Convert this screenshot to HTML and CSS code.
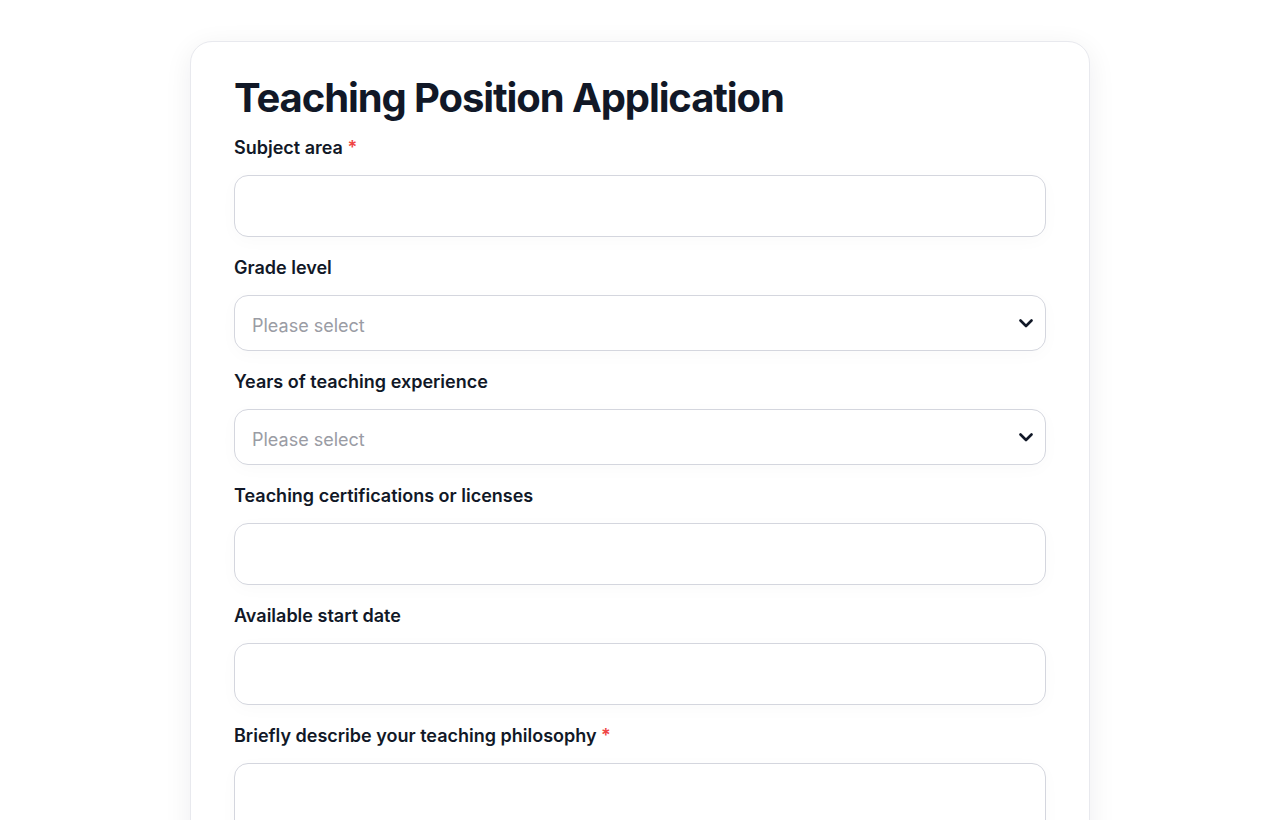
FILE: index.html
```html
<!DOCTYPE html>
<html lang="en">
<head>
  <meta charset="UTF-8">
  <meta name="viewport" content="width=device-width, initial-scale=1.0">
  <title>Teaching Position Application</title>
  <link rel="stylesheet" href="styles.css">
</head>
<body>

  <div class="card">
    <h1>Teaching Position Application</h1>

    <form class="form">
      <div class="field">
        <label for="subject">Subject area <span class="req">*</span></label>
        <input type="text" id="subject" class="input-box">
      </div>

      <div class="field">
        <label for="grade">Grade level</label>
        <div class="select-wrap">
          <select id="grade" class="select-box">
            <option>Please select</option>
            <option>Elementary</option>
            <option>Middle school</option>
            <option>High school</option>
          </select>
          <svg class="chevron" width="14" height="9" viewBox="0 0 14 9"><path d="M1.5 1.5 L7 7 L12.5 1.5" fill="none" stroke="#111827" stroke-width="2.6" stroke-linecap="round" stroke-linejoin="round"/></svg>
        </div>
      </div>

      <div class="field">
        <label for="years">Years of teaching experience</label>
        <div class="select-wrap">
          <select id="years" class="select-box">
            <option>Please select</option>
            <option>0-2</option>
            <option>3-5</option>
            <option>6-10</option>
            <option>10+</option>
          </select>
          <svg class="chevron" width="14" height="9" viewBox="0 0 14 9"><path d="M1.5 1.5 L7 7 L12.5 1.5" fill="none" stroke="#111827" stroke-width="2.6" stroke-linecap="round" stroke-linejoin="round"/></svg>
        </div>
      </div>

      <div class="field">
        <label for="certs">Teaching certifications or licenses</label>
        <input type="text" id="certs" class="input-box">
      </div>

      <div class="field">
        <label for="start">Available start date</label>
        <input type="text" id="start" class="input-box">
      </div>

      <div class="field">
        <label for="philosophy">Briefly describe your teaching philosophy <span class="req">*</span></label>
        <textarea id="philosophy" class="input-box text-area"></textarea>
      </div>
    </form>
  </div>

</body>
</html>
```

FILE: styles.css
```css
body {
  background-color: #fff;
  color: #111827;
  font-family: Inter, "Liberation Sans", sans-serif;
  margin: 0;
  padding: 41px 0 40px;
}
.card {
  width: 900px;
  box-sizing: border-box;
  margin: 0 auto;
  background-color: #fff;
  border: 1px solid #e8e9ee;
  border-radius: 22px;
  box-shadow: 0 6px 28px rgba(17, 24, 39, 0.07);
  padding: 32px 43px 40px;
}
h1 {
  margin: 0 0 14px;
  font-size: 40px;
  line-height: 48px;
  font-weight: 700;
  letter-spacing: -1.1px;
}
.form {
  display: flex;
  flex-direction: column;
  gap: 19px;
}
.field {
  display: flex;
  flex-direction: column;
  gap: 15px;
}
label {
  font-size: 18px;
  line-height: 24px;
  font-weight: 600;
}
.req {
  color: #ef4444;
}
.input-box, .select-box {
  box-sizing: border-box;
  width: 100%;
  height: 62px;
  border: 1px solid #d4d6de;
  border-radius: 14px;
  background-color: #fff;
  font-family: inherit;
  font-size: 18px;
  color: #111827;
  padding: 0 17px;
  box-shadow: 0 4px 18px rgba(17, 24, 39, 0.025);
}
.input-box:focus, .select-box:focus {
  outline: none;
}
.select-wrap {
  position: relative;
}
.select-box {
  height: 56px;
  appearance: none;
  -webkit-appearance: none;
  color: #9a9ca4;
  padding-top: 4px;
}
.chevron {
  position: absolute;
  right: 13px;
  top: 24px;
  pointer-events: none;
}
.text-area {
  height: 120px;
  resize: none;
  padding: 14px 17px;
}
```
